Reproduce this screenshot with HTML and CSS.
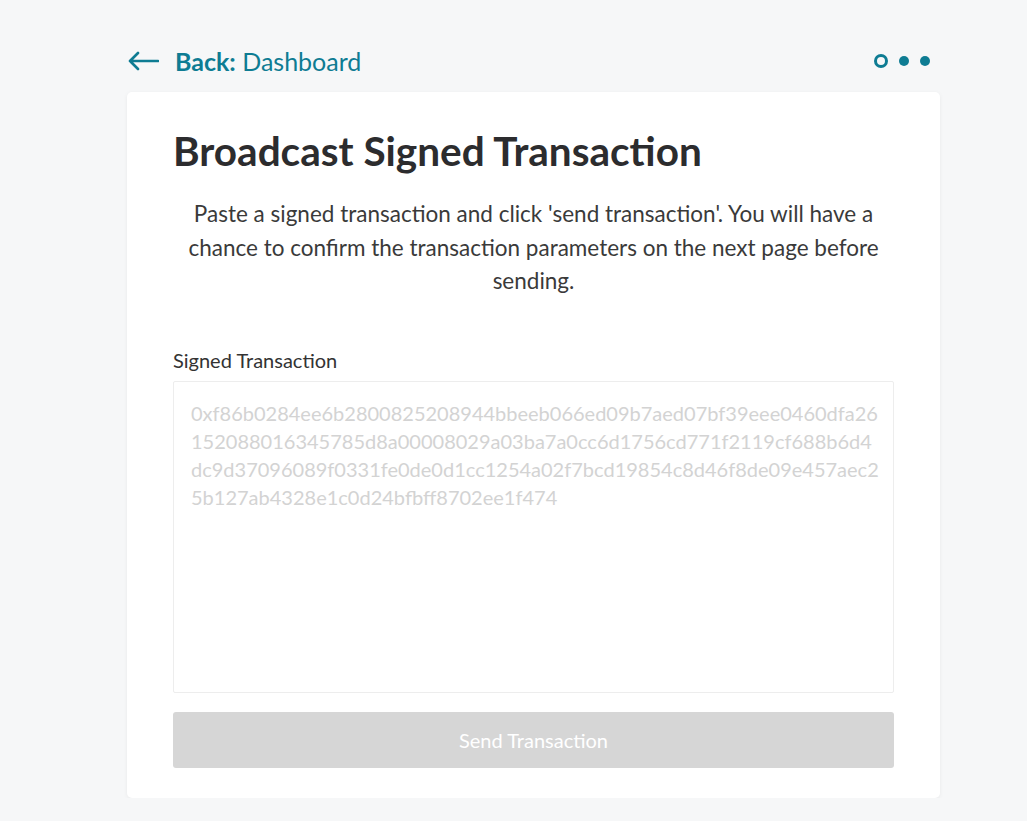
FILE: index.html
```html
<!DOCTYPE html>
<html lang="en">
<head>
    <meta charset="UTF-8">
    <meta name="viewport" content="width=device-width, initial-scale=1.0">
    <title>Broadcast Signed Transaction</title>
    <link rel="stylesheet" href="styles.css">
</head>
<body>
    <div class="page">
        <div class="topbar">
            <a class="back" href="#">
                <svg class="back-arrow" width="32" height="20" viewBox="0 0 32 20">
                    <path d="M31 10 H3 M11 2 L3 10 L11 18" fill="none" stroke="#0e7c93" stroke-width="2.6" stroke-linecap="round" stroke-linejoin="round"/>
                </svg>
                <span><strong>Back:</strong> Dashboard</span>
            </a>
            <div class="steps">
                <span class="dot ring"></span>
                <span class="dot"></span>
                <span class="dot"></span>
            </div>
        </div>

        <div class="card">
            <h1>Broadcast Signed Transaction</h1>
            <p class="intro">Paste a signed transaction and click 'send transaction'. You will have a chance to confirm the transaction parameters on the next page before sending.</p>

            <label class="field-label" for="signedTx">Signed Transaction</label>
            <textarea id="signedTx" class="tx-input" placeholder="0xf86b0284ee6b2800825208944bbeeb066ed09b7aed07bf39eee0460dfa26&#10;152088016345785d8a00008029a03ba7a0cc6d1756cd771f2119cf688b6d4&#10;dc9d37096089f0331fe0de0d1cc1254a02f7bcd19854c8d46f8de09e457aec2&#10;5b127ab4328e1c0d24bfbff8702ee1f474"></textarea>

            <button class="send-btn" disabled>Send Transaction</button>
        </div>
    </div>
</body>
</html>
```

FILE: styles.css
```css
body {
    margin: 0;
    padding: 0;
    background-color: #f6f7f8;
    font-family: Lato, "Open Sans", sans-serif;
    color: #333;
}
.page {
    width: 813px;
    margin: 0 auto 0 127px;
    padding-top: 42px;
}
.topbar {
    display: flex;
    justify-content: space-between;
    align-items: center;
    height: 38px;
    margin-bottom: 12px;
}
.back {
    display: flex;
    align-items: center;
    gap: 16px;
    color: #0e7c93;
    text-decoration: none;
    font-size: 25px;
}
.back strong {
    font-weight: 700;
}
.steps {
    display: flex;
    align-items: center;
    gap: 11px;
    margin-right: 10px;
}
.dot {
    width: 10px;
    height: 10px;
    border-radius: 50%;
    background-color: #0e7c93;
}
.dot.ring {
    width: 8px;
    height: 8px;
    background-color: transparent;
    border: 3px solid #0e7c93;
}
.card {
    background: white;
    border-radius: 5px;
    box-shadow: 0 1px 4px rgba(0, 0, 0, 0.06);
    padding: 30px 46px 30px 46px;
}
h1 {
    margin: 0;
    font-size: 40.5px;
    font-weight: 700;
    color: #2c2c2e;
    line-height: 58px;
}
.intro {
    text-align: center;
    font-size: 22.5px;
    line-height: 33.5px;
    color: #3a3a3a;
    margin: 17px 0 0 0;
}
.field-label {
    display: block;
    font-size: 20px;
    margin-top: 50px;
    margin-bottom: 9px;
    color: #333;
}
.tx-input {
    display: block;
    box-sizing: border-box;
    width: 100%;
    height: 312px;
    padding: 17px 6px 16px 17px;
    border: 1px solid #ededed;
    border-radius: 2px;
    font-family: Lato, sans-serif;
    font-size: 20px;
    line-height: 28px;
    white-space: pre;
    overflow: hidden;
    resize: none;
    outline: none;
}
.tx-input::placeholder {
    color: #d3d3d3;
}
.send-btn {
    display: block;
    width: 100%;
    height: 56px;
    margin-top: 19px;
    border: none;
    border-radius: 3px;
    background-color: #d6d6d6;
    color: white;
    font-family: Lato, sans-serif;
    font-size: 20px;
}
```
